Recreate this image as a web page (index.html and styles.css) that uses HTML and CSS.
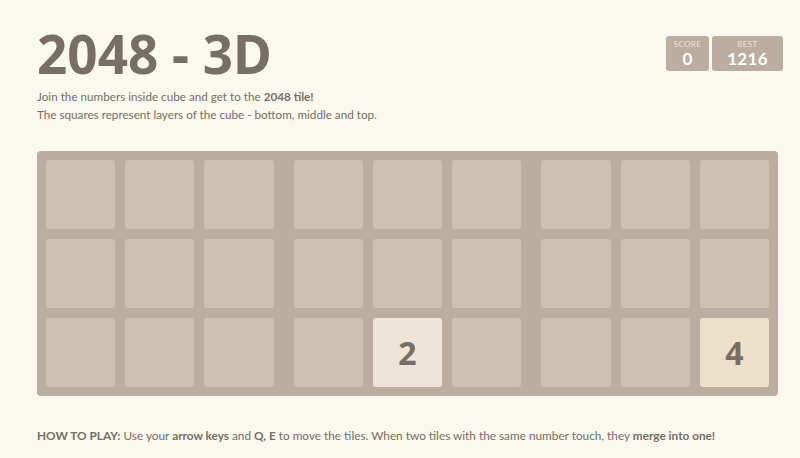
FILE: index.html
```html
<!DOCTYPE html>
<html>
<head>
<meta charset="utf-8">
<link rel="stylesheet" href="styles.css">
</head>
<body>
<div class="container">
  <div class="heading">
    <h1 class="title">2048 - 3D</h1>
    <div class="scores">
      <div class="score-box score"><span class="label">SCORE</span><span class="value">0</span></div>
      <div class="score-box best"><span class="label">BEST</span><span class="value">1216</span></div>
    </div>
  </div>
  <p class="intro">Join the numbers inside cube and get to the <strong>2048 tile!</strong><br>The squares represent layers of the cube - bottom, middle and top.</p>
  <div class="board">
    <div class="layer">
      <div class="cell"></div><div class="cell"></div><div class="cell"></div>
      <div class="cell"></div><div class="cell"></div><div class="cell"></div>
      <div class="cell"></div><div class="cell"></div><div class="cell"></div>
    </div>
    <div class="layer">
      <div class="cell"></div><div class="cell"></div><div class="cell"></div>
      <div class="cell"></div><div class="cell"></div><div class="cell"></div>
      <div class="cell"></div><div class="cell tile-2">2</div><div class="cell"></div>
    </div>
    <div class="layer">
      <div class="cell"></div><div class="cell"></div><div class="cell"></div>
      <div class="cell"></div><div class="cell"></div><div class="cell"></div>
      <div class="cell"></div><div class="cell"></div><div class="cell tile-4">4</div>
    </div>
  </div>
  <p class="howto"><strong>HOW TO PLAY:</strong> Use your <strong>arrow keys</strong> and <strong>Q, E</strong> to move the tiles. When two tiles with the same number touch, they <strong>merge into one!</strong></p>
</div>
</body>
</html>
```

FILE: styles.css
```css
html, body {
  margin: 0;
  padding: 0;
  background: #faf8ef;
  color: #776e65;
  font-family: "Lato", "Noto Sans", sans-serif;
}
.container {
  width: 746px;
  padding: 0 0 0 37px;
}
.heading {
  display: flex;
  justify-content: space-between;
  align-items: flex-start;
  padding-top: 29px;
}
.title {
  margin: 0;
  font-family: "Noto Sans", sans-serif;
  font-size: 53px;
  line-height: 50px;
  font-weight: 700;
  color: #776e65;
}
.scores {
  display: flex;
  gap: 3px;
  margin-top: 7px;
}
.score-box {
  background: #bbada0;
  border-radius: 3px;
  height: 35px;
  display: flex;
  flex-direction: column;
  align-items: center;
  justify-content: center;
  color: #fff;
  box-sizing: border-box;
  font-family: "Lato", sans-serif;
}
.score { width: 43px; }
.best { width: 71px; }
.label {
  font-size: 8px;
  color: #eee4da;
  line-height: 10px;
  letter-spacing: 0.4px;
}
.value {
  font-size: 17px;
  font-weight: 700;
  line-height: 19px;
  letter-spacing: 0.3px;
}
.intro {
  margin: 8px 0 0 0;
  font-size: 11.7px;
  line-height: 18px;
}
.intro strong, .howto strong { font-weight: 700; }
.board {
  margin-top: 28px;
  width: 741px;
  box-sizing: border-box;
  background: #bbada0;
  border-radius: 4px;
  padding: 9px;
  display: grid;
  grid-template-columns: 1fr 1fr 1fr;
  column-gap: 20px;
}
.layer {
  display: grid;
  grid-template-columns: repeat(3, 1fr);
  grid-template-rows: repeat(3, 69px);
  gap: 10px;
}
.cell {
  background: #cdc1b4;
  border-radius: 3px;
  display: flex;
  align-items: center;
  justify-content: center;
  font-family: "Noto Sans", sans-serif;
  font-size: 32px;
  font-weight: 700;
  color: #776e65;
}
.tile-2 { background: #eee4da; }
.tile-4 { background: #ede0c8; }
.howto {
  margin: 31px 0 0 0;
  font-size: 11.8px;
  line-height: 18px;
  white-space: nowrap;
}
```
